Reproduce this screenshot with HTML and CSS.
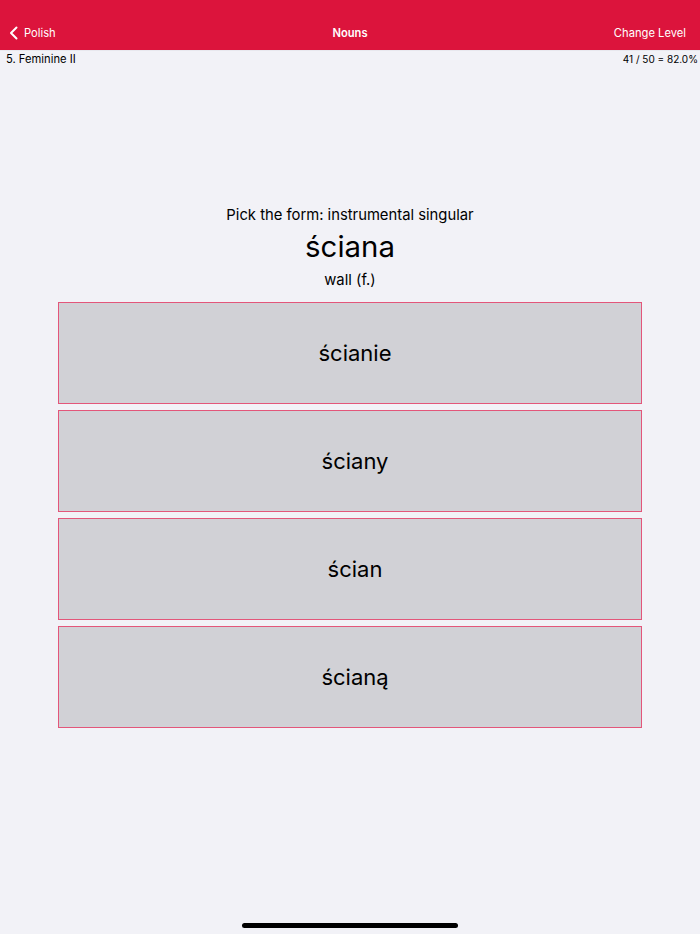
FILE: index.html
```html
<!DOCTYPE html>
<html>
<head>
<meta charset="utf-8">
<link rel="stylesheet" href="styles.css">
</head>
<body>
<div class="screen">
  <header class="nav">
    <div class="nav-left">
      <svg class="chev" width="10" height="14" viewBox="0 0 10 14"><path d="M7.5 1.5 L2 7 L7.5 12.5" fill="none" stroke="#fff" stroke-width="2" stroke-linecap="round" stroke-linejoin="round"/></svg>
      <span>Polish</span>
    </div>
    <div class="nav-title">Nouns</div>
    <div class="nav-right">Change Level</div>
  </header>
  <div class="info">
    <span class="level">5. Feminine II</span>
    <span class="score">41 / 50 = 82.0%</span>
  </div>
  <main class="quiz">
    <div class="prompt">Pick the form: instrumental singular</div>
    <div class="word">ściana</div>
    <div class="gloss">wall (f.)</div>
    <div class="options">
      <button class="opt">ścianie</button>
      <button class="opt">ściany</button>
      <button class="opt">ścian</button>
      <button class="opt">ścianą</button>
    </div>
  </main>
  <div class="home-ind"></div>
</div>
</body>
</html>
```
FILE: styles.css
```css
* { box-sizing: border-box; }
html, body { margin: 0; padding: 0; }
body {
  width: 700px;
  height: 934px;
  background: #f2f2f7;
  font-family: Inter, "Liberation Sans", sans-serif;
  color: #000;
  overflow: hidden;
}
.screen {
  position: relative;
  height: 934px;
  display: flex;
  flex-direction: column;
}
.nav {
  height: 51px;
  background: #dc143c;
  color: #fff;
  display: flex;
  align-items: center;
  justify-content: space-between;
  padding: 16px 14px 0 9px;
  font-size: 11.2px;
  border-bottom: 1px solid #e8e8ee;
  position: relative;
}
.nav-left {
  display: flex;
  align-items: center;
  gap: 5px;
}
.nav-title {
  position: absolute;
  left: 0;
  right: 0;
  top: 16px;
  bottom: 0;
  display: flex;
  align-items: center;
  justify-content: center;
  font-weight: 600;
  pointer-events: none;
}
.info {
  display: flex;
  justify-content: space-between;
  align-items: center;
  padding: 0 2px 0 6px;
  height: 16px;
  font-size: 11.2px;
}
.score { font-size: 10px; }
.quiz {
  display: flex;
  flex-direction: column;
  align-items: center;
  padding-top: 138px;
}
.prompt {
  font-size: 14.8px;
  line-height: 20px;
}
.word {
  font-size: 29.4px;
  line-height: 40px;
  margin-top: 2px;
}
.gloss {
  font-size: 14.8px;
  line-height: 20px;
  margin-top: 3px;
}
.options {
  margin-top: 12px;
  display: flex;
  flex-direction: column;
  gap: 6px;
  width: 584px;
}
.opt {
  height: 102px;
  background: #d1d1d6;
  border: 1px solid #e3567a;
  font-family: inherit;
  font-size: 22px;
  color: #000;
  padding: 0 0 0 10px;
  margin: 0;
}
.home-ind {
  position: absolute;
  left: 242px;
  top: 923px;
  width: 216px;
  height: 5px;
  border-radius: 3px;
  background: #000;
}
```
